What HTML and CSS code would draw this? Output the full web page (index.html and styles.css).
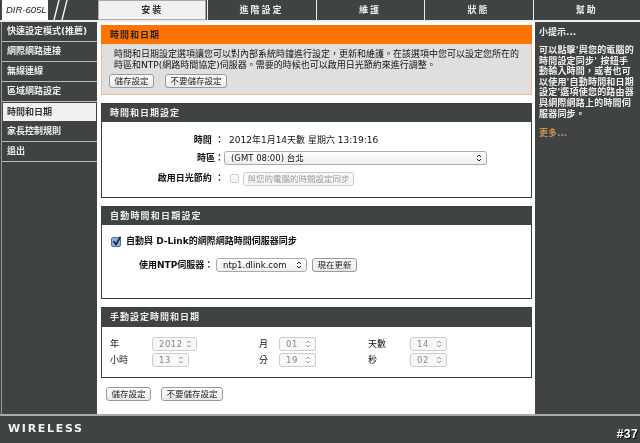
FILE: index.html
```html
<!DOCTYPE html>
<html lang="zh-Hant">
<head>
<meta charset="utf-8">
<title>DIR-605L</title>
<link rel="stylesheet" href="styles.css">
</head>
<body>
<div class="page">
  <header class="top">
    <div class="logo">
      <span class="model">DIR-605L</span>
      <svg class="slashes" width="18" height="20" viewBox="0 0 18 20"><path d="M8 0 3 20M16 0 11 20" stroke="#fff" stroke-width="1.3" fill="none"/></svg>
    </div>
    <nav class="tabs">
      <a class="tab active">安裝</a><a class="tab">進階設定</a><a class="tab">維護</a><a class="tab">狀態</a><a class="tab">幫助</a>
    </nav>
  </header>
  <aside class="side">
    <a class="item">快速設定模式(推薦)</a>
    <a class="item">網際網路連接</a>
    <a class="item">無線連線</a>
    <a class="item">區域網路設定</a>
    <a class="item current">時間和日期</a>
    <a class="item">家長控制規則</a>
    <a class="item">退出</a>
  </aside>
  <main class="main">
    <section class="intro">
      <h2 class="intro-title">時間和日期</h2>
      <div class="intro-body">
        <p class="intro-text">時間和日期設定選項讓您可以對內部系統時鐘進行設定，更新和維護。在該選項中您可以設定您所在的<br>時區和NTP(網路時間協定)伺服器。需要的時候也可以啟用日光節約來進行調整。</p>
        <div class="btns"><button class="btn w45">儲存設定</button><button class="btn w61">不要儲存設定</button></div>
      </div>
    </section>
    <section class="box box-time">
      <h2 class="box-title">時間和日期設定</h2>
      <div class="time-grid">
        <div class="lbl">時間 ：</div><div class="val">2012年1月14天數 星期六 13:19:16</div>
        <div class="lbl">時區：</div><div class="sel sel-zone"><span>(GMT 08:00) 台北</span><svg class="arr" width="6" height="8" viewBox="0 0 6 8"><path d="M1 3 3 1 5 3M1 5 3 7 5 5" fill="none" stroke="#222" stroke-width="1"/></svg></div>
        <div class="lbl">啟用日光節約 ：</div><div class="dst"><span class="cb"></span><button class="btn off w111">與您的電腦的時間設定同步</button></div>
      </div>
    </section>
    <section class="box box-auto">
      <h2 class="box-title">自動時間和日期設定</h2>
      <div class="auto-line">
        <svg class="check" width="11" height="11" viewBox="0 0 11 11"><rect x=".5" y="1.5" width="9" height="9" rx="1.5" fill="#8fb0dc" stroke="#4d6f9f"/><path d="M2.5 5 5 8.5 9.5 .8" fill="none" stroke="#15233f" stroke-width="1.7"/></svg>
        <strong>自動與 D-Link的網際網路時間伺服器同步</strong>
      </div>
      <div class="ntp-line">
        <strong class="ntp-lbl">使用NTP伺服器：</strong>
        <div class="sel sel-ntp"><span>ntp1.dlink.com</span><svg class="arr" width="6" height="8" viewBox="0 0 6 8"><path d="M1 3 3 1 5 3M1 5 3 7 5 5" fill="none" stroke="#222" stroke-width="1"/></svg></div>
        <button class="btn w45">現在更新</button>
      </div>
    </section>
    <section class="box box-manual">
      <h2 class="box-title">手動設定時間和日期</h2>
      <div class="manual">
        <div class="c-lbl">年</div><div class="sel off s45"><span>2012</span><svg class="arr" width="6" height="8" viewBox="0 0 6 8"><path d="M1 3 3 1 5 3M1 5 3 7 5 5" fill="none" stroke="#999"/></svg></div>
        <div class="c-lbl">月</div><div class="sel off s37"><span>01</span><svg class="arr" width="6" height="8" viewBox="0 0 6 8"><path d="M1 3 3 1 5 3M1 5 3 7 5 5" fill="none" stroke="#999"/></svg></div>
        <div class="c-lbl">天數</div><div class="sel off s37"><span>14</span><svg class="arr" width="6" height="8" viewBox="0 0 6 8"><path d="M1 3 3 1 5 3M1 5 3 7 5 5" fill="none" stroke="#999"/></svg></div>
        <div class="c-lbl">小時</div><div class="sel off s37"><span>13</span><svg class="arr" width="6" height="8" viewBox="0 0 6 8"><path d="M1 3 3 1 5 3M1 5 3 7 5 5" fill="none" stroke="#999"/></svg></div>
        <div class="c-lbl">分</div><div class="sel off s37"><span>19</span><svg class="arr" width="6" height="8" viewBox="0 0 6 8"><path d="M1 3 3 1 5 3M1 5 3 7 5 5" fill="none" stroke="#999"/></svg></div>
        <div class="c-lbl">秒</div><div class="sel off s37"><span>02</span><svg class="arr" width="6" height="8" viewBox="0 0 6 8"><path d="M1 3 3 1 5 3M1 5 3 7 5 5" fill="none" stroke="#999"/></svg></div>
      </div>
    </section>
    <div class="btns btns-bottom"><button class="btn w45">儲存設定</button><button class="btn w61">不要儲存設定</button></div>
  </main>
  <aside class="hints">
    <h3 class="hint-title">小提示...</h3>
    <p class="hint-text">可以點擊'與您的電腦的<br>時間設定同步' 按鈕手<br>動輸入時間，或者也可<br>以使用'自動時間和日期<br>設定'選項使您的路由器<br>與網際網路上的時間伺<br>服器同步。</p>
    <a class="more">更多...</a>
  </aside>
  <footer class="foot">
    <span class="wireless">WIRELESS</span>
    <span class="badge">#37</span>
  </footer>
</div>
</body>
</html>
```
FILE: styles.css
```css
* { box-sizing: border-box; }
html, body { margin: 0; height: 100%; }
body {
  background: #404344;
  color: #111;
  font: 9px/11px "DejaVu Sans", "Noto Sans CJK TC", sans-serif;
  overflow: hidden;
}
.page {
  width: 640px;
  height: 443px;
  display: grid;
  grid-template-columns: 97px 438px 105px;
  grid-template-rows: 22px 393px 28px;
  filter: blur(0.35px);
}
.top { grid-column: 1 / 4; display: flex; border-bottom: 2px solid #eee; }
.logo { width: 97px; display: flex; padding-left: 2px; height: 20px; }
.model {
  width: 46px;
  background: #fff;
  font: italic 9.5px/20px "Liberation Sans", sans-serif;
  padding-left: 4px;
  color: #222;
}
.slashes { margin-left: 3px; }
.tabs { flex: 1; display: flex; gap: 1px; padding-left: 1px; }
.tab {
  flex: 1;
  text-align: center;
  font-weight: 700;
  font-size: 9px;
  line-height: 20px;
  letter-spacing: 2px;
  color: #eee;
  background: #404344;
  border-left: 1px solid #eee;
}
.tab:first-child { border: 0; }
.tab.active { background: #f1f1f1; color: #333; border: 1px solid #aaa; line-height: 19px; }
.side { margin-left: 1px; border-left: 1px solid #999; display: flex; flex-direction: column; }
.item {
  height: 20px;
  padding-left: 5px;
  font-weight: 700;
  line-height: 18px;
  color: #eee;
  background: #404344;
  border-bottom: 1px solid #bbb;
  white-space: nowrap;
}
.item.current { background: #f1f1f1; color: #333; border: 1px solid #444; padding-left: 4px; }
.main { background: #fff; padding: 3px 3px 0 4px; }
h2 { margin: 0; font-size: 9px; font-weight: 700; }
.intro { height: 70px; background: #dfdfdf; border: 1px solid #f3b98c; }
.intro-title { height: 19px; margin: -1px -1px 0; background: #ff7300; color: #222; padding-left: 9px; letter-spacing: 1px; line-height: 20px; }
.intro-body { padding: 5px 0 0 12px; }
.intro-text { margin: 0; line-height: 10.5px; }
.btns { display: flex; }
.intro .btns { margin: 4px 0 0 -5px; gap: 11px; }
.btn {
  height: 14px;
  padding: 0;
  font: 8.5px/12px "DejaVu Sans", "Noto Sans CJK TC", sans-serif;
  color: #222;
  background: linear-gradient(#fff, #e9e9e9);
  border: 1px solid #999;
  border-radius: 3px;
}
.btn.off { color: #999; border-color: #ccc; background: #f7f7f7; }
.w45 { width: 45px; }
.w61 { width: 62px; }
.w111 { width: 111px; }
.box { border: 1px solid #3c3f40; }
.box-title { height: 18px; background: #404344; color: #eee; padding-left: 8px; letter-spacing: 1px; line-height: 18px; }
.box-time { margin-top: 8px; height: 95px; }
.time-grid {
  display: grid;
  grid-template-columns: 122px 1fr;
  grid-template-rows: 18px 18px 23px;
  padding-top: 9px;
  align-items: center;
}
.lbl { text-align: right; font-weight: 700; white-space: nowrap; }
.val { padding-left: 5px; }
.sel {
  height: 14px;
  display: flex;
  align-items: center;
  justify-content: space-between;
  padding: 0 4px 0 6px;
  background: linear-gradient(#fff, #eee);
  border: 1px solid #aaa;
  border-radius: 3px;
  font-size: 8.5px;
}
.sel.off { color: #888; background: #f8f8f8; border-color: #ccc; letter-spacing: .5px; }
.sel-zone { width: 263px; }
.sel-ntp { width: 91px; }
.dst { display: flex; align-items: center; gap: 4px; padding-left: 6px; }
.cb { width: 9px; height: 9px; border: 1px solid #ccc; border-radius: 2px; background: #f7f7f7; }
.box-auto { margin-top: 8px; height: 93px; }
.box-auto .box-title { letter-spacing: 1.2px; }
.auto-line { display: flex; align-items: center; gap: 4px; padding: 11px 0 0 9px; }
.ntp-line { display: flex; align-items: center; gap: 5px; padding: 11px 0 0 37px; }
.ntp-lbl { width: 72px; white-space: nowrap; }
.box-manual { margin-top: 8px; height: 71px; }
.box-manual .box-title { height: 19px; line-height: 19px; }
.manual {
  display: grid;
  grid-template-columns: 42px 107px 20px 89px 42px 1fr;
  grid-auto-rows: 16px;
  align-items: center;
  padding: 9px 0 0 8px;
}
.s45 { width: 45px; }
.s37 { width: 37px; }
.btns-bottom { margin: 9px 0 0 5px; gap: 10px; }
.hints { padding: 4px 0 0 4px; background: #404344; color: #eee; }
.hint-title { margin: 0; font-size: 9px; font-weight: 700; line-height: 12px; }
.hint-text { margin: 7px 0 0; font-weight: 700; line-height: 10.6px; letter-spacing: .2px; white-space: nowrap; }
.more { display: block; margin-top: 9px; color: #c98b50; font-weight: 700; }
.foot {
  grid-column: 1 / 4;
  border-top: 2px solid #aaa;
  display: flex;
  justify-content: space-between;
  align-items: flex-end;
  padding: 0 2px 1px 8px;
  margin-top: -1px;
  height: 29px;
}
.wireless { font: 700 11px/14px "DejaVu Sans", sans-serif; letter-spacing: 1.7px; color: #f2f2f2; margin-bottom: 6px; }
.badge { font: 700 12px/12px "Liberation Mono", monospace; color: #fff; text-shadow: 1px 1px 0 #000; margin-bottom: 1px; }
```
